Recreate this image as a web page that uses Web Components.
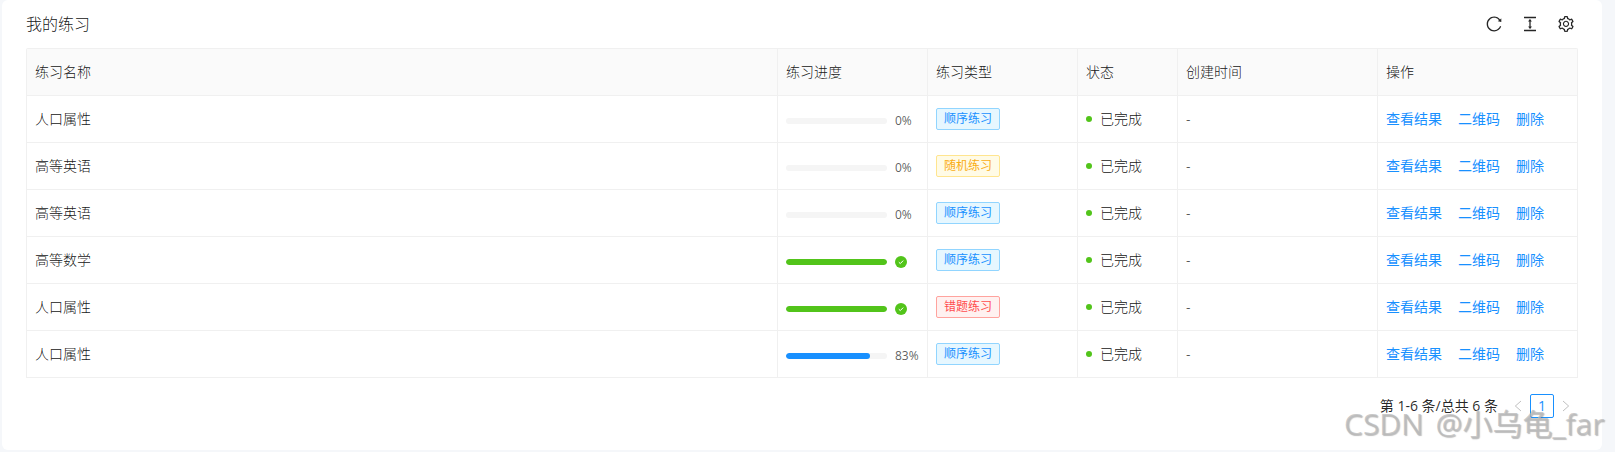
<!DOCTYPE html>
<html lang="zh-CN">
<head>
<meta charset="utf-8">
<title>我的练习</title>
<style>
html, body { margin: 0; padding: 0; background: #f5f7fa; }
body {
    width: 1615px;
    height: 452px;
    overflow: hidden;
    font-family: "Open Sans", "Noto Sans CJK SC", sans-serif;
    font-size: 14px;
    font-weight: 300;
    line-height: 22px;
    color: rgba(0, 0, 0, .92);
}
</style>
</head>
<body>
<pc-panel>
    <span slot="title">我的练习</span>
    <pc-icon slot="tools" name="reload"></pc-icon>
    <pc-icon slot="tools" name="height"></pc-icon>
    <pc-icon slot="tools" name="setting"></pc-icon>

    <pc-table>
        <pc-row head>
            <pc-cell>练习名称</pc-cell><pc-cell>练习进度</pc-cell><pc-cell>练习类型</pc-cell>
            <pc-cell>状态</pc-cell><pc-cell>创建时间</pc-cell><pc-cell>操作</pc-cell>
        </pc-row>
        <pc-row>
            <pc-cell>人口属性</pc-cell><pc-cell><pc-progress percent="0"></pc-progress></pc-cell>
            <pc-cell><pc-tag color="blue">顺序练习</pc-tag></pc-cell><pc-cell><pc-status>已完成</pc-status></pc-cell>
            <pc-cell>-</pc-cell><pc-cell><pc-actions></pc-actions></pc-cell>
        </pc-row>
        <pc-row>
            <pc-cell>高等英语</pc-cell><pc-cell><pc-progress percent="0"></pc-progress></pc-cell>
            <pc-cell><pc-tag color="gold">随机练习</pc-tag></pc-cell><pc-cell><pc-status>已完成</pc-status></pc-cell>
            <pc-cell>-</pc-cell><pc-cell><pc-actions></pc-actions></pc-cell>
        </pc-row>
        <pc-row>
            <pc-cell>高等英语</pc-cell><pc-cell><pc-progress percent="0"></pc-progress></pc-cell>
            <pc-cell><pc-tag color="blue">顺序练习</pc-tag></pc-cell><pc-cell><pc-status>已完成</pc-status></pc-cell>
            <pc-cell>-</pc-cell><pc-cell><pc-actions></pc-actions></pc-cell>
        </pc-row>
        <pc-row>
            <pc-cell>高等数学</pc-cell><pc-cell><pc-progress percent="100"></pc-progress></pc-cell>
            <pc-cell><pc-tag color="blue">顺序练习</pc-tag></pc-cell><pc-cell><pc-status>已完成</pc-status></pc-cell>
            <pc-cell>-</pc-cell><pc-cell><pc-actions></pc-actions></pc-cell>
        </pc-row>
        <pc-row>
            <pc-cell>人口属性</pc-cell><pc-cell><pc-progress percent="100"></pc-progress></pc-cell>
            <pc-cell><pc-tag color="red">错题练习</pc-tag></pc-cell><pc-cell><pc-status>已完成</pc-status></pc-cell>
            <pc-cell>-</pc-cell><pc-cell><pc-actions></pc-actions></pc-cell>
        </pc-row>
        <pc-row>
            <pc-cell>人口属性</pc-cell><pc-cell><pc-progress percent="83"></pc-progress></pc-cell>
            <pc-cell><pc-tag color="blue">顺序练习</pc-tag></pc-cell><pc-cell><pc-status>已完成</pc-status></pc-cell>
            <pc-cell>-</pc-cell><pc-cell><pc-actions></pc-actions></pc-cell>
        </pc-row>
    </pc-table>

    <pc-pagination slot="footer" range="第 1-6 条/总共 6 条" page="1"></pc-pagination>
</pc-panel>
<pc-watermark>CSDN @小乌龟_far</pc-watermark>

<script>
const ICONS = {
    reload: 'M909.1 209.3l-56.4 44.1C775.8 155.1 656.2 92 521.9 92 290 92 102.3 279.5 102 511.5 101.7 743.7 289.8 932 521.9 932c181.3 0 335.8-115 394.6-276.1 1.5-4.2-.7-8.9-4.9-10.3l-56.7-19.5a8 8 0 0 0-10.1 4.8c-1.8 5-3.8 10-5.9 14.9-17.3 41-42.1 77.8-73.7 109.4A344.77 344.77 0 0 1 655.9 829c-42.3 17.9-87.4 27-133.8 27-46.5 0-91.5-9.1-133.8-27A341.5 341.5 0 0 1 279 755.2a342.16 342.16 0 0 1-73.7-109.4c-17.9-42.4-27-87.4-27-133.9s9.1-91.5 27-133.9c17.3-41 42.1-77.8 73.7-109.4 31.6-31.6 68.4-56.4 109.3-73.8 42.3-17.9 87.4-27 133.8-27 46.5 0 91.5 9.1 133.8 27a341.5 341.5 0 0 1 109.3 73.8c9.9 9.9 19.2 20.4 27.8 31.4l-60.2 47a8 8 0 0 0 3 14.1l175.6 43c5 1.2 9.9-2.6 9.9-7.7l.8-180.9c-.1-6.6-7.8-10.3-13-6.2z',
    height: 'M840 836H184c-4.4 0-8 3.6-8 8v60c0 4.4 3.6 8 8 8h656c4.4 0 8-3.6 8-8v-60c0-4.4-3.6-8-8-8zm0-724H184c-4.4 0-8 3.6-8 8v60c0 4.4 3.6 8 8 8h656c4.4 0 8-3.6 8-8v-60c0-4.4-3.6-8-8-8zM610.8 378c6 0 9.4-7 5.7-11.7L515.7 238.7a7.14 7.14 0 0 0-11.3 0L403.6 366.3a7.23 7.23 0 0 0 5.7 11.7H476v268h-62.8c-6 0-9.4 7-5.7 11.7l100.8 127.5c2.9 3.7 8.5 3.7 11.3 0l100.8-127.5c3.7-4.7.4-11.7-5.7-11.7H548V378h62.8z',
    setting: 'M924.8 625.7l-65.5-56c3.1-19 4.7-38.4 4.7-57.8s-1.6-38.8-4.7-57.8l65.5-56a32.03 32.03 0 0 0 9.3-35.2l-.9-2.6a443.74 443.74 0 0 0-79.7-137.9l-1.8-2.1a32.12 32.12 0 0 0-35.1-9.5l-81.3 28.9c-30-24.6-63.5-44-99.7-57.6l-15.7-85a32.05 32.05 0 0 0-25.8-25.7l-2.7-.5c-52.1-9.4-106.9-9.4-159 0l-2.7.5a32.05 32.05 0 0 0-25.8 25.7l-15.8 85.4a351.86 351.86 0 0 0-99 57.4l-81.9-29.1a32 32 0 0 0-35.1 9.5l-1.8 2.1a446.02 446.02 0 0 0-79.7 137.9l-.9 2.6c-4.5 12.5-.8 26.5 9.3 35.2l66.3 56.6c-3.1 18.8-4.6 38-4.6 57.1 0 19.2 1.5 38.4 4.6 57.1L99 625.5a32.03 32.03 0 0 0-9.3 35.2l.9 2.6c18.1 50.4 44.9 96.9 79.7 137.9l1.8 2.1a32.12 32.12 0 0 0 35.1 9.5l81.9-29.1c29.8 24.5 63.1 43.9 99 57.4l15.8 85.4a32.05 32.05 0 0 0 25.8 25.7l2.7.5a449.4 449.4 0 0 0 159 0l2.7-.5a32.05 32.05 0 0 0 25.8-25.7l15.7-85a350 350 0 0 0 99.7-57.6l81.3 28.9a32 32 0 0 0 35.1-9.5l1.8-2.1c34.8-41.1 61.6-87.5 79.7-137.9l.9-2.6c4.5-12.3.8-26.3-9.3-35zM788.3 465.9c2.5 15.1 3.8 30.6 3.8 46.1s-1.3 31-3.8 46.1l-6.6 40.1 74.7 63.9a370.03 370.03 0 0 1-42.6 73.6L721 702.8l-31.4 25.8c-23.9 19.6-50.5 35-79.3 45.8l-38.1 14.3-17.9 97a377.5 377.5 0 0 1-85 0l-17.9-97.2-37.8-14.5c-28.5-10.8-55-26.2-78.7-45.7l-31.4-25.9-93.4 33.2c-17-22.9-31.2-47.6-42.6-73.6l75.5-64.5-6.5-40c-2.4-14.9-3.7-30.3-3.7-45.5 0-15.3 1.2-30.6 3.7-45.5l6.5-40-75.5-64.5c11.3-26.1 25.6-50.7 42.6-73.6l93.4 33.2 31.4-25.9c23.7-19.5 50.2-34.9 78.7-45.7l37.9-14.3 17.9-97.2c28.1-3.2 56.8-3.2 85 0l17.9 97 38.1 14.3c28.7 10.8 55.4 26.2 79.3 45.8l31.4 25.8 92.8-32.9c17 22.9 31.2 47.6 42.6 73.6L781.8 426l6.5 39.9zM512 326c-97.2 0-176 78.8-176 176s78.8 176 176 176 176-78.8 176-176-78.8-176-176-176zm79.2 255.2A111.6 111.6 0 0 1 512 614c-29.9 0-58-11.7-79.2-32.8A111.6 111.6 0 0 1 400 502c0-29.9 11.7-58 32.8-79.2C454 401.6 482.1 390 512 390c29.9 0 58 11.6 79.2 32.8A111.6 111.6 0 0 1 624 502c0 29.9-11.7 58-32.8 79.2z'
};

class PcPanel extends HTMLElement {
    constructor() {
        super();
        this.attachShadow({ mode: 'open' });
        this.shadowRoot.innerHTML = `
<style>
:host { display: block; box-sizing: border-box; margin-left: 2px; width: 1600px; height: 450px; padding: 0 24px; background: #fff; border-radius: 6px; }
.head { display: flex; justify-content: space-between; align-items: center; height: 48px; }
.title { font-size: 16px; }
.tools { display: flex; gap: 20px; padding-right: 4px; }
</style>
<div class="head">
    <div class="title"><slot name="title"></slot></div>
    <div class="tools"><slot name="tools"></slot></div>
</div>
<slot></slot>
<slot name="footer"></slot>`;
    }
}

class PcIcon extends HTMLElement {
    constructor() {
        super();
        this.attachShadow({ mode: 'open' });
        this.shadowRoot.innerHTML = `
<style>
:host { display: block; width: 16px; height: 16px; color: rgba(0, 0, 0, .85); }
svg { display: block; }
</style>
<svg width="16" height="16" viewBox="64 64 896 896" fill="currentColor"><path d="${ICONS[this.getAttribute('name')]}"/></svg>`;
    }
}

class PcTable extends HTMLElement {
    constructor() {
        super();
        this.attachShadow({ mode: 'open' });
        this.shadowRoot.innerHTML = `
<style>
:host { display: block; box-sizing: border-box; width: 1552px; border: 1px solid #f0f0f0; border-bottom: 0; border-radius: 2px 2px 0 0; }
</style>
<slot></slot>`;
    }
}

class PcRow extends HTMLElement {
    constructor() {
        super();
        this.attachShadow({ mode: 'open' });
        this.shadowRoot.innerHTML = `
<style>
:host { display: grid; grid-template-columns: 751px 150px 150px 100px 200px 199px; border-bottom: 1px solid #f0f0f0; }
:host([head]) { background: #fafafa; }
</style>
<slot></slot>`;
    }
}

class PcCell extends HTMLElement {
    constructor() {
        super();
        this.attachShadow({ mode: 'open' });
        this.shadowRoot.innerHTML = `
<style>
:host { display: block; box-sizing: border-box; height: 46px; padding: 12px 8px; border-right: 1px solid #f0f0f0; }
:host(:last-child) { border-right: 0; }
</style>
<slot></slot>`;
    }
}

class PcProgress extends HTMLElement {
    constructor() {
        super();
        this.attachShadow({ mode: 'open' });
        const percent = Number(this.getAttribute('percent'));
        const done = percent >= 100;
        this.shadowRoot.innerHTML = `
<style>
:host { display: flex; box-sizing: border-box; height: 22px; padding-top: 4px; align-items: center; }
.rail { width: 101px; height: 6px; border-radius: 100px; background: #f5f5f5; overflow: hidden; }
.fill { height: 100%; border-radius: 100px; background: ${done ? '#52c41a' : '#1890ff'}; width: ${percent}%; }
.text { margin-left: 8px; font-size: 12px; font-weight: 400; line-height: 18px; color: rgba(0, 0, 0, .65); }
svg { display: block; margin-left: 8px; }
</style>
<div class="rail"><div class="fill"></div></div>
${done
    ? `<svg width="12" height="12" viewBox="0 0 12 12"><circle cx="6" cy="6" r="6" fill="#52c41a"/><path d="M3.8 6.2 5.3 7.6 8.2 4.6" fill="none" stroke="#fff" stroke-width="1"/></svg>`
    : `<span class="text">${percent}%</span>`}`;
    }
}

class PcTag extends HTMLElement {
    constructor() {
        super();
        this.attachShadow({ mode: 'open' });
        this.shadowRoot.innerHTML = `
<style>
:host { display: block; box-sizing: border-box; width: 64px; height: 22px; padding: 0 7px; border: 1px solid; border-radius: 2px; font-size: 12px; font-weight: 400; line-height: 20px; white-space: nowrap; }
:host([color="blue"]) { color: #1890ff; background: #e6f7ff; border-color: #91d5ff; }
:host([color="gold"]) { color: #faad14; background: #fffbe6; border-color: #ffe58f; }
:host([color="red"]) { color: #ff4d4f; background: #fff1f0; border-color: #ffa39e; }
</style>
<slot></slot>`;
    }
}

class PcStatus extends HTMLElement {
    constructor() {
        super();
        this.attachShadow({ mode: 'open' });
        this.shadowRoot.innerHTML = `
<style>
:host { display: flex; align-items: center; }
.dot { width: 6px; height: 6px; border-radius: 50%; background: #52c41a; margin-right: 8px; }
</style>
<span class="dot"></span><slot></slot>`;
    }
}

class PcActions extends HTMLElement {
    constructor() {
        super();
        this.attachShadow({ mode: 'open' });
        this.shadowRoot.innerHTML = `
<style>
:host { display: flex; gap: 16px; font-weight: 400; }
a { color: #1890ff; text-decoration: none; }
</style>
<a href="#">查看结果</a><a href="#">二维码</a><a href="#">删除</a>`;
    }
}

class PcPagination extends HTMLElement {
    constructor() {
        super();
        this.attachShadow({ mode: 'open' });
        this.shadowRoot.innerHTML = `
<style>
:host { display: flex; justify-content: flex-end; align-items: center; height: 24px; margin-top: 16px; font-weight: 400; color: rgba(0, 0, 0, .85); }
.range { margin-right: 8px; }
.arrow { display: flex; width: 24px; height: 24px; align-items: center; justify-content: center; color: rgba(0, 0, 0, .25); }
.page { box-sizing: border-box; width: 24px; height: 24px; border: 1px solid #1890ff; border-radius: 2px; color: #1890ff; text-align: center; line-height: 22px; }
</style>
<span class="range">${this.getAttribute('range')}</span>
<span class="arrow"><svg width="12" height="12" viewBox="0 0 12 12" fill="none" stroke="currentColor"><path d="M9 1 3.4 6 9 11"/></svg></span>
<span class="page">${this.getAttribute('page')}</span>
<span class="arrow"><svg width="12" height="12" viewBox="0 0 12 12" fill="none" stroke="currentColor"><path d="M3 1 8.6 6 3 11"/></svg></span>`;
    }
}

class PcWatermark extends HTMLElement {
    constructor() {
        super();
        this.attachShadow({ mode: 'open' });
        this.shadowRoot.innerHTML = `
<style>
:host { position: absolute; left: 1344px; top: 406px; font-family: "Open Sans", "Noto Sans CJK SC", sans-serif; font-size: 30px; font-weight: 400; word-spacing: 4px; line-height: 36px; color: rgba(185, 185, 185, .75); text-shadow: 1px 1px 1px rgba(90, 90, 90, .4); white-space: nowrap; pointer-events: none; }
</style>
<slot></slot>`;
    }
}

customElements.define('pc-panel', PcPanel);
customElements.define('pc-icon', PcIcon);
customElements.define('pc-table', PcTable);
customElements.define('pc-row', PcRow);
customElements.define('pc-cell', PcCell);
customElements.define('pc-progress', PcProgress);
customElements.define('pc-tag', PcTag);
customElements.define('pc-status', PcStatus);
customElements.define('pc-actions', PcActions);
customElements.define('pc-pagination', PcPagination);
customElements.define('pc-watermark', PcWatermark);
</script>
</body>
</html>
